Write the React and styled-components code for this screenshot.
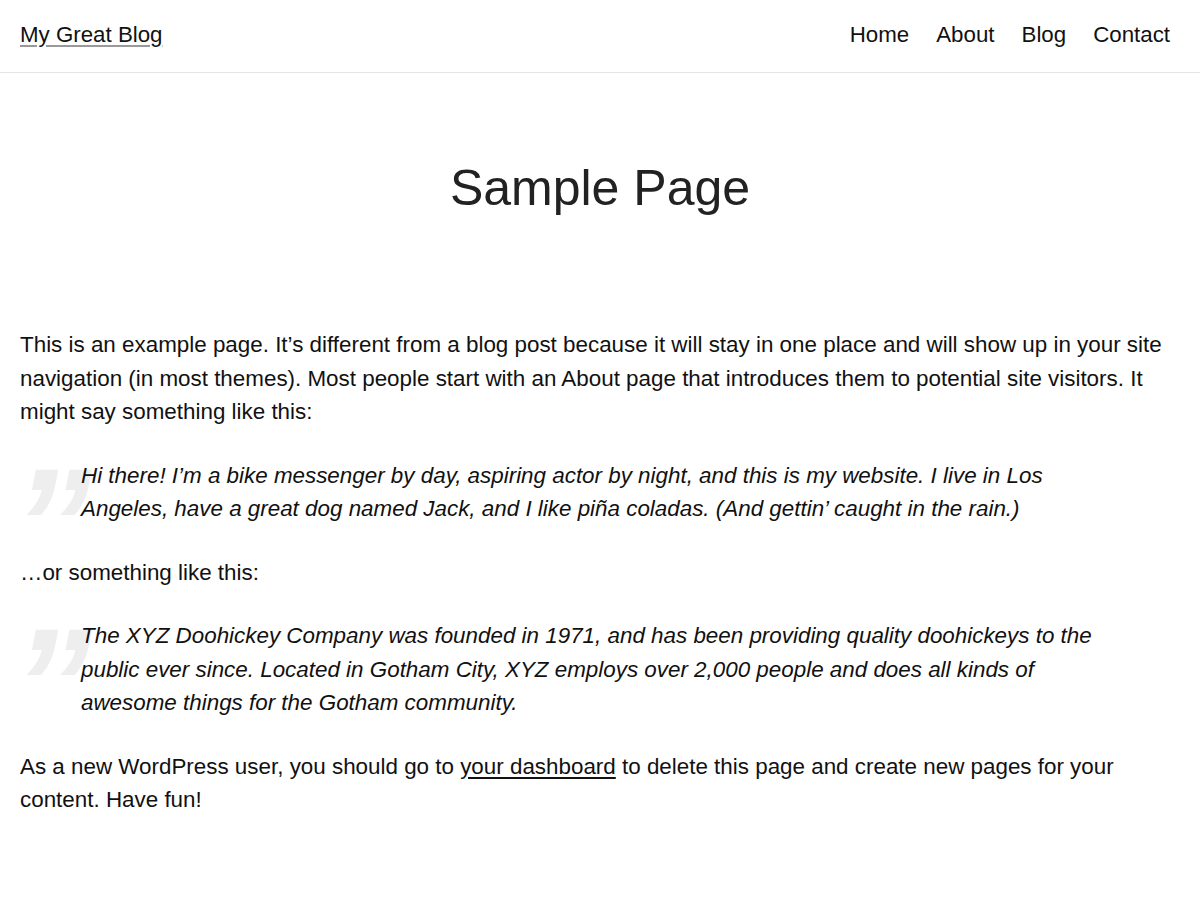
import React from "react";
import styled, { createGlobalStyle } from "styled-components";

const GlobalStyle = createGlobalStyle`
  body {
    margin: 0;
    background: #fff;
    color: #111;
    font-family: "Liberation Sans", Arial, Helvetica, sans-serif;
  }
`;

const Header = styled.header`
  display: flex;
  align-items: center;
  justify-content: space-between;
  height: 73px;
  box-sizing: border-box;
  padding: 0 30px 3px 20px;
  border-bottom: 1px solid #e6e6e6;
`;

const SiteTitle = styled.a`
  font-size: 22.3px;
  color: #111;
  text-decoration: underline;
  text-decoration-color: #999;
  text-underline-offset: 3px;
`;

const Nav = styled.nav`
  display: flex;
  gap: 27px;
`;

const NavLink = styled.a`
  font-size: 22.3px;
  color: #111;
  text-decoration: none;
`;

const Main = styled.main`
  padding: 0 20px;
`;

const Title = styled.h1`
  margin: 0;
  padding: 85px 0 110px;
  text-align: center;
  font-size: 50px;
  font-weight: 400;
  line-height: 1.2;
  color: #222;
`;

const Para = styled.p`
  margin: 0 0 30px;
  font-size: 22.4px;
  line-height: 33.5px;
`;

const Quote = styled.blockquote`
  position: relative;
  margin: 0 0 30px;
  padding-left: 61px;
  max-width: 1030px;

  p {
    position: relative;
    margin: 0;
    font-size: 22.4px;
    line-height: 33.5px;
    font-style: italic;
  }
`;

const QuoteMark = styled.span`
  position: absolute;
  left: -8px;
  top: -14px;
  font-size: 160px;
  line-height: 1;
  font-weight: 700;
  font-style: italic;
  color: #eeeeee;
  user-select: none;
`;

const TextLink = styled.a`
  color: #111;
  text-decoration: underline;
  text-underline-offset: 3px;
`;

export default function App() {
  return (
    <>
      <GlobalStyle />
      <Header>
        <SiteTitle href="#">My Great Blog</SiteTitle>
        <Nav>
          {["Home", "About", "Blog", "Contact"].map((item) => (
            <NavLink key={item} href="#">
              {item}
            </NavLink>
          ))}
        </Nav>
      </Header>
      <Main>
        <Title>Sample Page</Title>
        <Para>
          This is an example page. It’s different from a blog post because it will stay in one
          place and will show up in your site navigation (in most themes). Most people start with
          an About page that introduces them to potential site visitors. It might say something
          like this:
        </Para>
        <Quote>
          <QuoteMark aria-hidden="true">”</QuoteMark>
          <p>
            Hi there! I’m a bike messenger by day, aspiring actor by night, and this is my website.
            I live in Los Angeles, have a great dog named Jack, and I like piña coladas. (And
            gettin’ caught in the rain.)
          </p>
        </Quote>
        <Para>…or something like this:</Para>
        <Quote>
          <QuoteMark aria-hidden="true">”</QuoteMark>
          <p>
            The XYZ Doohickey Company was founded in 1971, and has been providing quality
            doohickeys to the public ever since. Located in Gotham City, XYZ employs over 2,000
            people and does all kinds of awesome things for the Gotham community.
          </p>
        </Quote>
        <Para>
          As a new WordPress user, you should go to <TextLink href="#">your dashboard</TextLink> to
          delete this page and create new pages for your content. Have fun!
        </Para>
      </Main>
    </>
  );
}
